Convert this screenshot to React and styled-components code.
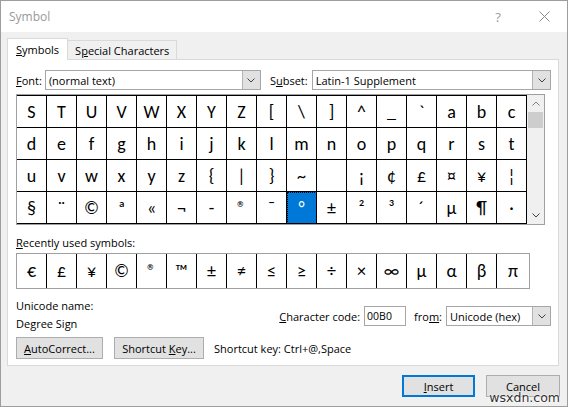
import React from 'react';
import styled, { createGlobalStyle } from 'styled-components';

const GlobalStyle = createGlobalStyle`
    html, body {
        margin: 0;
        padding: 0;
        background: #f0f0f0;
    }
    * {
        box-sizing: border-box;
    }
`;

const uiFont = `'Segoe UI', 'Open Sans', 'Noto Sans', sans-serif`;
const glyphFont = `Calibri, Lato, 'Open Sans', sans-serif`;

const Window = styled.div`
    position: relative;
    width: 568px;
    height: 407px;
    border: 1px solid #9d9d9d;
    background: #f0f0f0;
    font-family: ${uiFont};
    font-size: 11px;
    color: #000;
    display: flex;
    flex-direction: column;
    overflow: hidden;
`;

const TitleBar = styled.div`
    height: 31px;
    flex: none;
    background: #fff;
    display: flex;
    align-items: center;
    padding-left: 8px;
    color: #999;
    font-size: 12px;
`;

const TitleText = styled.span`
    flex: 1;
`;

const TitleButton = styled.div`
    width: 46px;
    height: 31px;
    display: flex;
    align-items: center;
    justify-content: center;
    color: #999;
    font-size: 13px;
`;

const Body = styled.div`
    flex: 1;
    padding: 0 6px 0 6px;
    display: flex;
    flex-direction: column;
`;

const TabBar = styled.div`
    height: 28px;
    display: flex;
    align-items: flex-end;
    margin-bottom: -1px;
    position: relative;
    z-index: 1;
`;

const Tab = styled.div`
    height: ${p => (p.$active ? '22px' : '19px')};
    margin-bottom: ${p => (p.$active ? '0' : '1px')};
    padding: 0 ${p => (p.$active ? '8px' : '7px')};
    background: ${p => (p.$active ? '#fff' : '#f0f0f0')};
    border: 1px solid #d9d9d9;
    border-bottom: none;
    border-left: ${p => (p.$active ? '1px solid #d9d9d9' : 'none')};
    display: flex;
    align-items: center;
    font-size: 11px;
`;

const Panel = styled.div`
    background: #fff;
    border: 1px solid #d9d9d9;
    width: 552px;
    padding: 10px 7px 6px 8px;
    display: flex;
    flex-direction: column;
`;

const Row = styled.div`
    display: flex;
    align-items: center;
`;

const Label = styled.span`
    margin-right: ${p => p.$gap || 0}px;
    white-space: nowrap;
`;

const Select = styled.div`
    height: 20px;
    width: ${p => (p.$width ? `${p.$width}px` : 'auto')};
    flex: ${p => (p.$width ? 'none' : 1)};
    border: 1px solid #a6a6a6;
    background: #fff;
    display: flex;
    align-items: center;
    padding-left: 3px;
    margin-right: ${p => p.$gap || 0}px;
`;

const SelectText = styled.span`
    flex: 1;
`;

const DropButton = styled.div`
    width: 18px;
    height: 18px;
    background: #e1e1e1;
    border-left: 1px solid #b4b4b4;
    display: flex;
    align-items: center;
    justify-content: center;
`;

const GridBox = styled.div`
    margin-top: 4px;
    width: 529px;
    border: 1px solid #a0a0a0;
    display: flex;
`;

const CellGrid = styled.div`
    display: grid;
    grid-template-columns: repeat(17, 30px);
    grid-auto-rows: 32px;
    border-top: 1px solid #000;
`;

const Cell = styled.div`
    border-right: 1px solid #000;
    border-bottom: 1px solid #000;
    display: flex;
    align-items: center;
    justify-content: center;
    font-family: ${glyphFont};
    font-size: 18px;
    background: ${p => (p.$selected ? '#0078d7' : '#fff')};
    color: ${p => (p.$selected ? '#fff' : '#000')};
    outline: ${p => (p.$selected ? '1px dotted #000' : 'none')};
    outline-offset: -1px;
`;

const ScrollBar = styled.div`
    width: 17px;
    background: #f0f0f0;
    display: flex;
    flex-direction: column;
`;

const ScrollArrow = styled.div`
    height: 17px;
    display: flex;
    align-items: center;
    justify-content: center;
`;

const ScrollTrack = styled.div`
    flex: 1;
    padding: 0 1px;
`;

const ScrollThumb = styled.div`
    height: 16px;
    background: #cdcdcd;
`;

const SectionLabel = styled.div`
    margin-top: 10px;
    height: 16px;
    line-height: 16px;
`;

const RecentBox = styled.div`
    margin-top: 2px;
    width: 514px;
    height: 36px;
    border: 1px solid #a0a0a0;
    display: grid;
    grid-template-columns: repeat(16, 30px) 1fr;
`;

const RecentCell = styled.div`
    border-right: ${p => (p.$last ? 'none' : '1px solid #000')};
    display: flex;
    align-items: center;
    justify-content: center;
    font-family: ${glyphFont};
    font-size: 18px;
`;

const InfoRow = styled.div`
    margin-top: 9px;
    display: flex;
    justify-content: space-between;
    align-items: flex-start;
`;

const InfoColumn = styled.div`
    display: flex;
    flex-direction: column;
`;

const InfoLine = styled.div`
    height: 18px;
    line-height: 16px;
`;

const CodeRow = styled.div`
    margin-top: 8px;
    display: flex;
    align-items: center;
`;

const CodeInput = styled.div`
    width: 42px;
    height: 20px;
    border: 1px solid #a6a6a6;
    padding-left: 2px;
    display: flex;
    align-items: center;
    font-size: 10.5px;
    margin-right: 8px;
`;

const ButtonRow = styled.div`
    margin-top: 3px;
    display: flex;
    align-items: center;
    gap: 11px;
`;

const Button = styled.div`
    width: ${p => p.$width}px;
    height: 22px;
    background: #e1e1e1;
    border: 1px solid ${p => (p.$primary ? '#0078d7' : '#adadad')};
    box-shadow: ${p => (p.$primary ? 'inset 0 0 0 1px #0078d7' : 'none')};
    display: flex;
    align-items: center;
    justify-content: center;
    white-space: nowrap;
`;

const ShortcutText = styled.span`
    margin-left: -1px;
`;

const Footer = styled.div`
    margin-top: 9px;
    display: flex;
    justify-content: flex-end;
    gap: 11px;
    padding-right: 1px;
`;

const Watermark = styled.div`
    position: absolute;
    right: 7px;
    bottom: 1px;
    line-height: 14px;
    font-family: 'DejaVu Sans', sans-serif;
    font-size: 12.5px;
    color: #333;
    text-shadow: 0 0 2px #fff, 0 0 2px #fff;
`;

const U = styled.span`
    text-decoration: underline;
    text-underline-offset: 1px;
`;

const Chevron = ({ up }) => (
    <svg width="8" height="5" viewBox="0 0 8 5">
        <path
            d={up ? 'M0.5 4.5 L4 1 L7.5 4.5' : 'M0.5 0.5 L4 4 L7.5 0.5'}
            fill="none"
            stroke={up ? '#808080' : '#404040'}
            strokeWidth="1"
        />
    </svg>
);

const Combo = ({ text, width, gap }) => (
    <Select $width={width} $gap={gap}>
        <SelectText>{text}</SelectText>
        <DropButton>
            <Chevron />
        </DropButton>
    </Select>
);

const symbols = [
    'S', 'T', 'U', 'V', 'W', 'X', 'Y', 'Z', '[', '\\', ']', '^', '_', '`', 'a', 'b', 'c',
    'd', 'e', 'f', 'g', 'h', 'i', 'j', 'k', 'l', 'm', 'n', 'o', 'p', 'q', 'r', 's', 't',
    'u', 'v', 'w', 'x', 'y', 'z', '{', '|', '}', '~', '\u00a0', '¡', '¢', '£', '¤', '¥', '¦',
    '§', '¨', '©', 'ª', '«', '¬', '-', '®', '¯', '°', '±', '²', '³', '´', 'µ', '¶', '·',
];

const recent = ['€', '£', '¥', '©', '®', '™', '±', '≠', '≤', '≥', '÷', '×', '∞', 'µ', 'α', 'β', 'π'];

const App = () => (
    <>
        <GlobalStyle />
        <Window>
            <TitleBar>
                <TitleText>Symbol</TitleText>
                <TitleButton>?</TitleButton>
                <TitleButton>
                    <svg width="11" height="11" viewBox="0 0 11 11">
                        <path d="M0.5 0.5 L10.5 10.5 M10.5 0.5 L0.5 10.5" stroke="#8a8a8a" strokeWidth="1" />
                    </svg>
                </TitleButton>
            </TitleBar>
            <Body>
                <TabBar>
                    <Tab $active>
                        <span><U>S</U>ymbols</span>
                    </Tab>
                    <Tab>
                        <span>S<U>p</U>ecial Characters</span>
                    </Tab>
                </TabBar>
                <Panel>
                    <Row>
                        <Label $gap={3}><U>F</U>ont:</Label>
                        <Combo text="(normal text)" width={216} gap={9} />
                        <Label $gap={4}>S<U>u</U>bset:</Label>
                        <Combo text="Latin-1 Supplement" />
                    </Row>
                    <GridBox>
                        <CellGrid>
                            {symbols.map((s, i) => (
                                <Cell key={i} $selected={s === '°'}>{s}</Cell>
                            ))}
                        </CellGrid>
                        <ScrollBar>
                            <ScrollArrow>
                                <Chevron up />
                            </ScrollArrow>
                            <ScrollTrack>
                                <ScrollThumb />
                            </ScrollTrack>
                            <ScrollArrow>
                                <Chevron up={false} />
                            </ScrollArrow>
                        </ScrollBar>
                    </GridBox>
                    <SectionLabel><U>R</U>ecently used symbols:</SectionLabel>
                    <RecentBox>
                        {recent.map((s, i) => (
                            <RecentCell key={i} $last={i === recent.length - 1}>{s}</RecentCell>
                        ))}
                    </RecentBox>
                    <InfoRow>
                        <InfoColumn>
                            <InfoLine>Unicode name:</InfoLine>
                            <InfoLine>Degree Sign</InfoLine>
                        </InfoColumn>
                        <CodeRow>
                            <Label $gap={4}><U>C</U>haracter code:</Label>
                            <CodeInput>00B0</CodeInput>
                            <Label $gap={4}>fro<U>m</U>:</Label>
                            <Combo text="Unicode (hex)" width={105} />
                        </CodeRow>
                    </InfoRow>
                    <ButtonRow>
                        <Button $width={87}><span><U>A</U>utoCorrect...</span></Button>
                        <Button $width={90}><span>Shortcut <U>K</U>ey...</span></Button>
                        <ShortcutText>Shortcut key: Ctrl+@,Space</ShortcutText>
                    </ButtonRow>
                </Panel>
                <Footer>
                    <Button $width={73} $primary><span><U>I</U>nsert</span></Button>
                    <Button $width={74}>Cancel</Button>
                </Footer>
            </Body>
            <Watermark>wsxdn.com</Watermark>
        </Window>
    </>
);

export default App;
